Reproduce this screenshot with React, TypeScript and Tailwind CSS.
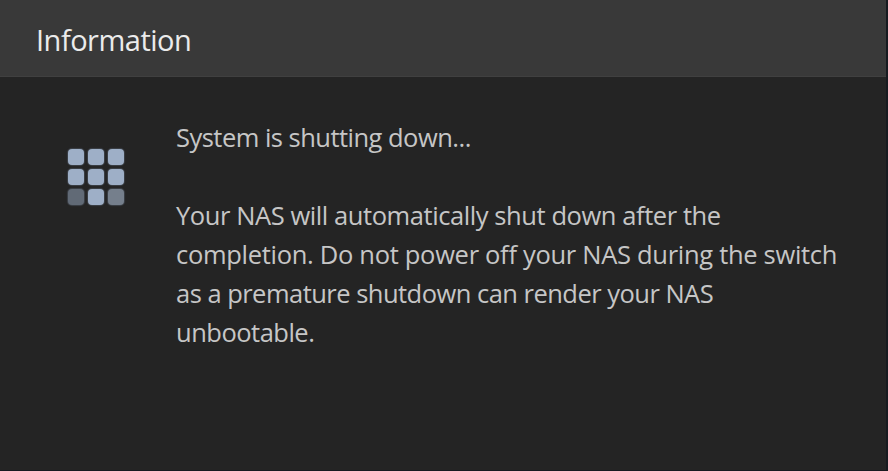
interface Dot {
  id: number;
  color: string;
}

const dots: Dot[] = [
  { id: 1, color: "bg-[#9eafc7]" },
  { id: 2, color: "bg-[#9eafc7]" },
  { id: 3, color: "bg-[#9eafc7]" },
  { id: 4, color: "bg-[#9eafc7]" },
  { id: 5, color: "bg-[#9eafc7]" },
  { id: 6, color: "bg-[#9eafc7]" },
  { id: 7, color: "bg-[#616a76]" },
  { id: 8, color: "bg-[#9eafc7]" },
  { id: 9, color: "bg-[#757f8c]" },
];

const LoadingDots = () => (
  <div className="grid grid-cols-3 gap-1 shrink-0 w-14 h-14 mt-[31px]">
    {dots.map(dot => (
      <span key={dot.id} className={`w-4 h-4 rounded-[4px] shadow-[0_0_1px_1px_#55606d80] ${dot.color}`} />
    ))}
  </div>
);

export default function App() {
  return (
    <div className="w-[888px] h-[471px] overflow-hidden bg-[#171b20] pr-[2px] pb-px font-['Open_Sans',sans-serif]">
      <div className="flex flex-col w-full h-full bg-[#242424]">
        <header className="h-[77px] shrink-0 bg-[#393939] border-b border-[#404040] px-9 pt-1 flex items-center">
          <h1 className="text-[29px] leading-10 tracking-[-0.5px] text-[#ebebeb]">Information</h1>
        </header>

        <div className="flex gap-[52px] pl-[68px] pt-[41px]">
          <LoadingDots />
          <div className="text-[25.5px] leading-[39px] text-[#c6c6c6] whitespace-nowrap">
            <p className="mb-[39px] tracking-[-0.52px]">System is shutting down...</p>
            <p>
              <span className="tracking-[-0.42px]">Your NAS will automatically shut down after the</span><br />
              <span className="tracking-[-0.3px]">completion. Do not power off your NAS during the switch</span><br />
              <span className="tracking-[-0.52px]">as a premature shutdown can render your NAS</span><br />
              <span className="tracking-[-0.5px]">unbootable.</span>
            </p>
          </div>
        </div>
      </div>
    </div>
  );
}
